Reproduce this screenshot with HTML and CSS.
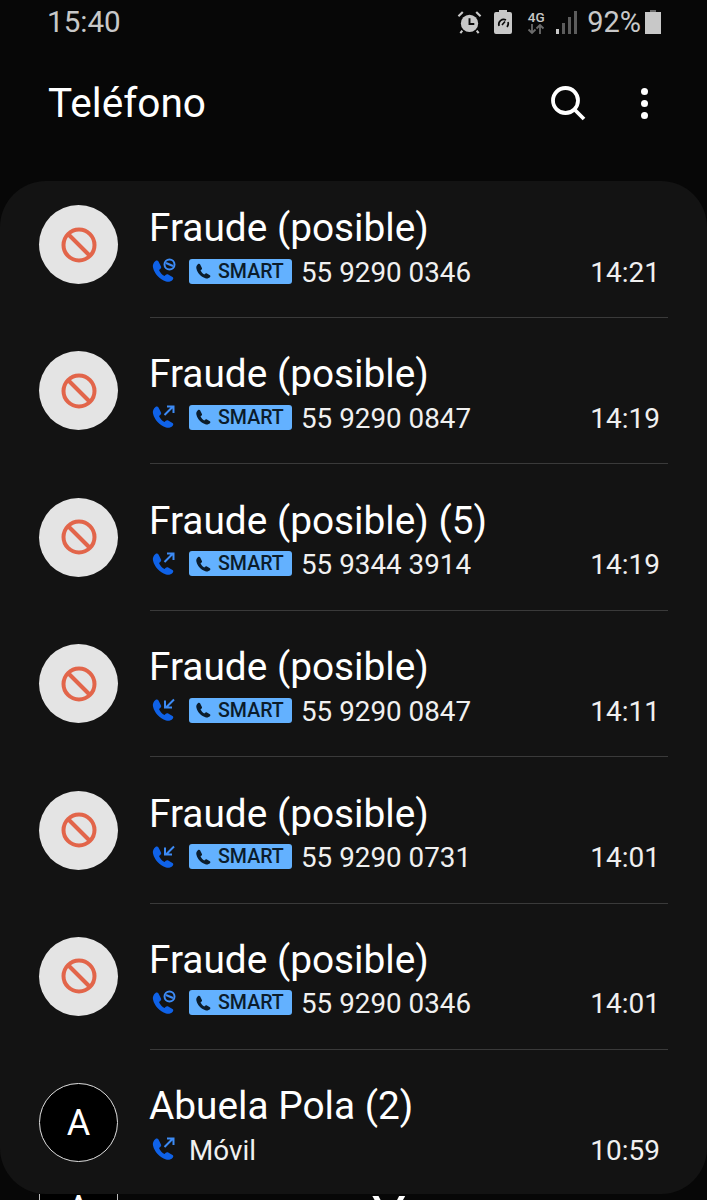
FILE: index.html
```html
<!DOCTYPE html>
<html lang="es">
  <head>
    <meta charset="UTF-8" />
    <title>Teléfono</title>
    <link rel="stylesheet" href="styles.css">
  </head>
  <body>
    <svg class="defs" width="0" height="0">
      <defs>
        <path id="handset" d="M7.500 3.500L10 8.500C10.500 9.500 10 10.500 9 11.200L8 12C9 14.500 11 16.800 13.500 18L14.500 17C15.300 16.200 16.300 16 17.200 16.500L21.500 19C22.500 19.600 22.500 20.800 21.700 21.700C20 23.600 17.500 24.300 15 23.500C8.500 21.300 3.500 16 2 9.500C1.400 7 2.500 4.600 4.500 3C5.500 2.300 6.900 2.500 7.500 3.500Z" />
        <symbol id="ban" viewBox="0 0 36 36">
          <circle cx="18" cy="18" r="15.500" fill="none" stroke="#e2654a" stroke-width="4" />
          <path d="M7.500 7.500l21 21" stroke="#e2654a" stroke-width="4" />
        </symbol>
        <symbol id="call-blocked" viewBox="0 0 26 26">
          <use href="#handset" fill="#0f62e8" />
          <circle cx="18.500" cy="6.500" r="5" fill="none" stroke="#3d8bf5" stroke-width="2" />
          <path d="M15 5l7 3" stroke="#3d8bf5" stroke-width="2" />
        </symbol>
        <symbol id="call-out" viewBox="0 0 26 26">
          <use href="#handset" fill="#0f62e8" />
          <path d="M13.500 11l8-8M16 2.500h6.500V9" fill="none" stroke="#3d8bf5" stroke-width="2" />
        </symbol>
        <symbol id="call-in" viewBox="0 0 26 26">
          <use href="#handset" fill="#0f62e8" />
          <path d="M23 2.500l-8 8M14 3.500v7h7" fill="none" stroke="#3d8bf5" stroke-width="2" />
        </symbol>
      </defs>
    </svg>

    <div class="phone">
      <div class="status-bar">
        <span class="clock">15:40</span>
        <div class="status-icons">
          <svg class="icon-alarm" viewBox="0 0 26 26">
            <circle cx="13" cy="14" r="9" fill="#c8c8c8" />
            <path d="M13 8.500V14.500H18" fill="none" stroke="#0a0a0a" stroke-width="2" />
            <path d="M1.500 6.500L6 2M24.500 6.500L20 2M5.500 21.500L3.500 24M20.500 21.500L22.500 24" stroke="#c8c8c8" stroke-width="2.200" />
          </svg>
          <svg class="icon-saver" viewBox="0 0 18 24">
            <path d="M5 0h8v2h3a2 2 0 0 1 2 2v18a2 2 0 0 1-2 2H2a2 2 0 0 1-2-2V4a2 2 0 0 1 2-2h3z" fill="#c8c8c8" />
            <path d="M5 16a5 5 0 0 1 7-6" fill="none" stroke="#0a0a0a" stroke-width="1.600" />
            <path d="M14 12a5 5 0 0 1-1 5M8 15l3-3.500" fill="none" stroke="#0a0a0a" stroke-width="1.600" />
          </svg>
          <div class="net">
            <span class="net-label">4G</span>
            <svg class="net-arrows" viewBox="0 0 18 10">
              <path d="M5 0v9M1.500 5.500L5 9l3.500-3.500" fill="none" stroke="#6b6b6b" stroke-width="1.800" />
              <path d="M13 10V1M9.500 4.500L13 1l3.500 3.500" fill="none" stroke="#6b6b6b" stroke-width="1.800" />
            </svg>
          </div>
          <svg class="icon-signal" viewBox="0 0 21 23">
            <rect x="0" y="18" width="3" height="5" fill="#c8c8c8" />
            <rect x="6" y="12" width="3" height="11" fill="#5c5c5c" />
            <rect x="12" y="6" width="3" height="17" fill="#5c5c5c" />
            <rect x="18" y="0" width="3" height="23" fill="#5c5c5c" />
          </svg>
          <span class="battery-text">92%</span>
          <svg class="icon-battery" viewBox="0 0 16 24">
            <path d="M5 0h6v2h5v22H0V2h5z" fill="#c8c8c8" />
            <rect x="5" y="0" width="6" height="2" fill="#6b6b6b" />
          </svg>
        </div>
      </div>

      <header class="app-bar">
        <h1>Teléfono</h1>
        <div class="app-actions">
          <svg class="icon-search" viewBox="0 0 36 36">
            <circle cx="15.500" cy="15.500" r="12.500" fill="none" stroke="#fff" stroke-width="3.800" />
            <path d="M24.500 24.500l9.500 9.500" stroke="#fff" stroke-width="3.800" />
          </svg>
          <div class="icon-more"><i></i><i></i><i></i></div>
        </div>
      </header>

      <main class="call-list">
        <div class="call-row">
          <div class="avatar blocked"><svg><use href="#ban" /></svg></div>
          <div class="call-info">
            <div class="call-name">Fraude (posible)</div>
            <div class="call-detail">
              <svg class="call-type"><use href="#call-blocked" /></svg>
              <span class="smart"><svg viewBox="0 0 26 26"><use href="#handset" /></svg>SMART</span>
              <span class="number">55 9290 0346</span>
              <span class="time">14:21</span>
            </div>
          </div>
        </div>
        <div class="call-row">
          <div class="avatar blocked"><svg><use href="#ban" /></svg></div>
          <div class="call-info">
            <div class="call-name">Fraude (posible)</div>
            <div class="call-detail">
              <svg class="call-type"><use href="#call-out" /></svg>
              <span class="smart"><svg viewBox="0 0 26 26"><use href="#handset" /></svg>SMART</span>
              <span class="number">55 9290 0847</span>
              <span class="time">14:19</span>
            </div>
          </div>
        </div>
        <div class="call-row">
          <div class="avatar blocked"><svg><use href="#ban" /></svg></div>
          <div class="call-info">
            <div class="call-name">Fraude (posible) (5)</div>
            <div class="call-detail">
              <svg class="call-type"><use href="#call-out" /></svg>
              <span class="smart"><svg viewBox="0 0 26 26"><use href="#handset" /></svg>SMART</span>
              <span class="number">55 9344 3914</span>
              <span class="time">14:19</span>
            </div>
          </div>
        </div>
        <div class="call-row">
          <div class="avatar blocked"><svg><use href="#ban" /></svg></div>
          <div class="call-info">
            <div class="call-name">Fraude (posible)</div>
            <div class="call-detail">
              <svg class="call-type"><use href="#call-in" /></svg>
              <span class="smart"><svg viewBox="0 0 26 26"><use href="#handset" /></svg>SMART</span>
              <span class="number">55 9290 0847</span>
              <span class="time">14:11</span>
            </div>
          </div>
        </div>
        <div class="call-row">
          <div class="avatar blocked"><svg><use href="#ban" /></svg></div>
          <div class="call-info">
            <div class="call-name">Fraude (posible)</div>
            <div class="call-detail">
              <svg class="call-type"><use href="#call-in" /></svg>
              <span class="smart"><svg viewBox="0 0 26 26"><use href="#handset" /></svg>SMART</span>
              <span class="number">55 9290 0731</span>
              <span class="time">14:01</span>
            </div>
          </div>
        </div>
        <div class="call-row">
          <div class="avatar blocked"><svg><use href="#ban" /></svg></div>
          <div class="call-info">
            <div class="call-name">Fraude (posible)</div>
            <div class="call-detail">
              <svg class="call-type"><use href="#call-blocked" /></svg>
              <span class="smart"><svg viewBox="0 0 26 26"><use href="#handset" /></svg>SMART</span>
              <span class="number">55 9290 0346</span>
              <span class="time">14:01</span>
            </div>
          </div>
        </div>
        <div class="call-row">
          <div class="avatar contact">A</div>
          <div class="call-info">
            <div class="call-name">Abuela Pola (2)</div>
            <div class="call-detail">
              <svg class="call-type"><use href="#call-out" /></svg>
              <span class="number">Móvil</span>
              <span class="time">10:59</span>
            </div>
          </div>
        </div>
      </main>

      <div class="next-row">
        <div class="next-avatar">A</div>
        <div class="next-name">Y</div>
      </div>
    </div>
  </body>
</html>
```

FILE: styles.css
```css
body {
  margin: 0;
  background-color: #070707;
  font-family: Roboto, "Liberation Sans", sans-serif;
  color: #fff;
}

.defs {
  display: block;
  height: 0;
}

.phone {
  height: 1200px;
  overflow: hidden;
}

.status-bar {
  height: 44px;
  padding: 0 46px 0 47px;
  display: flex;
  justify-content: space-between;
  align-items: center;
  color: #c8c8c8;
}

.clock {
  font-size: 29.6px;
}

.status-icons {
  display: flex;
  align-items: center;
}

.icon-alarm {
  width: 25px;
  height: 25px;
  margin-right: 12px;
}

.icon-saver {
  width: 18px;
  height: 24px;
  margin-right: 15px;
}

.net {
  width: 18px;
  margin-right: 11px;
  display: flex;
  flex-direction: column;
  align-items: center;
}

.net-label {
  font-size: 13.5px;
  font-weight: 500;
  line-height: 13px;
}

.net-arrows {
  width: 18px;
  height: 10px;
}

.icon-signal {
  width: 21px;
  height: 23px;
  margin-right: 10px;
}

.battery-text {
  font-size: 29px;
  margin-right: 4px;
}

.icon-battery {
  width: 16px;
  height: 24px;
}

.app-bar {
  height: 118px;
  padding: 0 59px 0 48px;
  display: flex;
  justify-content: space-between;
  align-items: center;
}

.app-bar h1 {
  margin: 0;
  font-size: 40.6px;
  font-weight: 400;
}

.app-actions {
  display: flex;
  align-items: center;
  gap: 55px;
}

.icon-search {
  width: 36px;
  height: 36px;
}

.icon-more {
  display: flex;
  flex-direction: column;
  gap: 5px;
}

.icon-more i {
  display: block;
  width: 7px;
  height: 7px;
  border-radius: 50%;
  background-color: #fff;
}

.call-list {
  margin-top: 19px;
  height: 1013px;
  background-color: #131313;
  border-radius: 46px;
}

.call-row {
  height: 146.4px;
  padding-left: 39px;
  display: flex;
  box-sizing: border-box;
}

.avatar {
  flex: none;
  width: 79px;
  height: 79px;
  margin-top: 24px;
  margin-right: 32px;
  border-radius: 50%;
  box-sizing: border-box;
  display: flex;
  justify-content: center;
  align-items: center;
}

.avatar svg {
  width: 36px;
  height: 36px;
}

.avatar.blocked {
  background-color: #e4e4e4;
}

.avatar.contact {
  background-color: #000;
  border: 1px solid #e0e0e0;
  font-size: 36px;
}

.call-info {
  flex: 1;
  height: 137px;
  margin-right: 39px;
  padding-top: 24px;
  box-sizing: border-box;
  border-bottom: 1px solid #3a3a3a;
}

.call-row:last-child .call-info {
  border-bottom: none;
}

.call-name {
  margin-left: -1px;
  font-size: 38.8px;
  line-height: 46px;
}

.call-detail {
  height: 32px;
  margin-top: 5px;
  display: flex;
  align-items: center;
  padding-right: 8px;
}

.call-type {
  width: 26px;
  height: 26px;
  margin-left: 1px;
  margin-right: 12px;
  margin-bottom: 2px;
}

.smart {
  height: 25px;
  width: 103px;
  margin-right: 9px;
  margin-bottom: 2px;
  box-sizing: border-box;
  padding-left: 6px;
  display: flex;
  align-items: center;
  gap: 5px;
  background-color: #63b1ff;
  border-radius: 3px;
  color: #0b1c2b;
  font-size: 19.6px;
  font-weight: 500;
}

.smart svg {
  width: 18px;
  height: 18px;
  fill: #0b1c2b;
}

.number {
  font-size: 27.8px;
  color: #f0f0f0;
}

.time {
  margin-left: auto;
  font-size: 28px;
  color: #f0f0f0;
}

.next-row {
  height: 6px;
  display: flex;
  overflow: hidden;
}

.next-avatar {
  width: 79px;
  height: 6px;
  margin-left: 39px;
  box-sizing: border-box;
  border-left: 1px solid #bbb;
  border-right: 1px solid #bbb;
  background-color: #000;
  font-size: 36px;
  line-height: 30px;
  text-align: center;
}

.next-name {
  margin-left: 254px;
  font-size: 56px;
  line-height: 46px;
}
```
